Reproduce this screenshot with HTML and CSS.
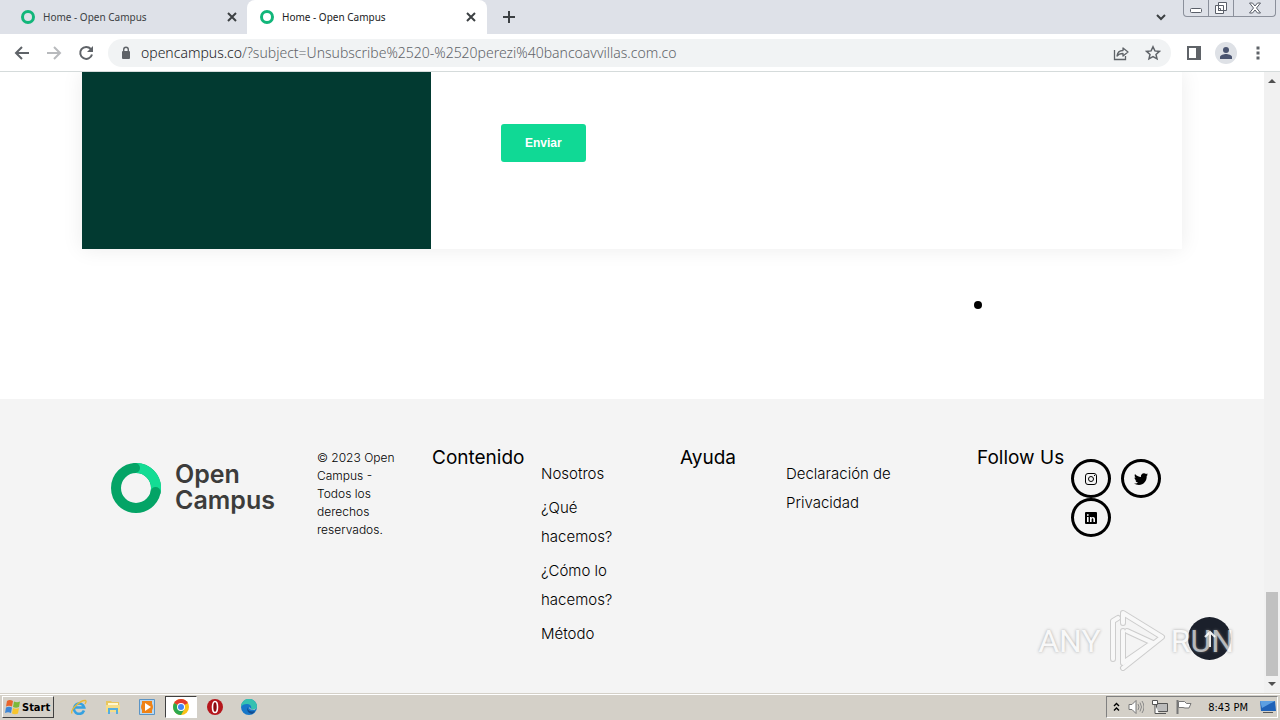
FILE: index.html
```html
<!DOCTYPE html>
<html lang="es">
<head>
    <meta charset="UTF-8">
    <meta name="viewport" content="width=device-width, initial-scale=1.0">
    <title>Home - Open Campus</title>
    <link rel="stylesheet" href="styles.css">
</head>
<body>
<header class="browser">
    <div class="tabs">
        <div class="tab">
            <span class="favicon"></span>
            <span class="tab-title">Home - Open Campus</span>
            <button class="icon-btn" aria-label="Close tab">
                <svg width="10" height="10" viewBox="0 0 10 10"><path d="M1 1l8 8M9 1l-8 8" stroke="#3c4043" stroke-width="2"/></svg>
            </button>
        </div>
        <div class="tab active">
            <span class="favicon"></span>
            <span class="tab-title">Home - Open Campus</span>
            <button class="icon-btn" aria-label="Close tab">
                <svg width="10" height="10" viewBox="0 0 10 10"><path d="M1 1l8 8M9 1l-8 8" stroke="#3c4043" stroke-width="2"/></svg>
            </button>
        </div>
        <button class="icon-btn new-tab" aria-label="New tab">
            <svg width="12" height="12" viewBox="0 0 12 12"><path d="M6 0v12M0 6h12" stroke="#3c4043" stroke-width="2"/></svg>
        </button>
        <button class="icon-btn tab-search" aria-label="Search tabs">
            <svg width="10" height="7" viewBox="0 0 10 7"><path d="M1 1l4 4 4-4" fill="none" stroke="#3c4043" stroke-width="2"/></svg>
        </button>
        <div class="window-controls">
            <button aria-label="Minimize"><svg width="24" height="16" viewBox="0 0 24 16"><rect x="6.500" y="8.500" width="11" height="4" rx="1" fill="#fff" stroke="#5a5f69"/></svg></button>
            <button aria-label="Restore"><svg width="24" height="16" viewBox="0 0 24 16"><path d="M9.500 2.500h8v8h-8z M6.500 5.500h8v8h-8z" fill="#fff" stroke="#5a5f69"/><path d="M9.500 8.500h2v2h-2z" fill="none" stroke="#5a5f69"/></svg></button>
            <button aria-label="Close"><svg width="41" height="16" viewBox="0 0 41 16"><path d="M15.500 3h3l2.500 3L23.500 3h3l-4 5 4 5h-3l-2.500-3-2.500 3h-3l4-5z" fill="#fff" stroke="#5a5f69"/></svg></button>
        </div>
    </div>
    <div class="toolbar">
        <button class="icon-btn" aria-label="Back"><svg width="16" height="16" viewBox="0 0 16 16"><path d="M15 8H2M8 2L2 8l6 6" fill="none" stroke="#5f6368" stroke-width="2"/></svg></button>
        <button class="icon-btn" aria-label="Forward"><svg width="16" height="16" viewBox="0 0 16 16"><path d="M1 8h13M8 2l6 6-6 6" fill="none" stroke="#b8babd" stroke-width="2"/></svg></button>
        <button class="icon-btn" aria-label="Reload"><svg width="16" height="16" viewBox="0 0 16 16"><path d="M12.800 4A6 6 0 1 0 14 9.500" fill="none" stroke="#5f6368" stroke-width="2"/><path d="M15 1v6H9z" fill="#5f6368"/></svg></button>
        <div class="address">
            <svg width="10" height="14" viewBox="0 0 10 14"><rect x="1" y="5" width="8" height="8" rx="1" fill="#5f6368"/><path d="M2.700 6V3.500a2.300 2.300 0 0 1 4.600 0V6" fill="none" stroke="#5f6368" stroke-width="1.400"/></svg>
            <div class="url"><span>opencampus.co</span>/?subject=Unsubscribe%2520-%2520perezi%40bancoavvillas.com.co</div>
            <button class="icon-btn" aria-label="Share"><svg width="16" height="16" viewBox="0 0 16 16"><path d="M1.500 5v9.500h11V11" fill="none" stroke="#5f6368" stroke-width="1.300"/><path d="M4 11c.5-4 3-5.500 6-5.500V3l5 4-5 4V8.500c-3 0-4.500.5-6 2.500z" fill="none" stroke="#5f6368" stroke-width="1.300" stroke-linejoin="round"/></svg></button>
            <button class="icon-btn" aria-label="Bookmark"><svg width="16" height="16" viewBox="0 0 16 16"><path d="M8 1.800l1.900 4.100 4.500.5-3.400 3 1 4.400L8 11.500l-4 2.300 1-4.400-3.400-3 4.500-.5z" fill="none" stroke="#5f6368" stroke-width="1.500"/></svg></button>
        </div>
        <div class="toolbar-actions">
            <button class="icon-btn" aria-label="Side panel"><svg width="14" height="14" viewBox="0 0 14 14"><path d="M1 1h12v12H1z" fill="none" stroke="#5f6368" stroke-width="2"/><path d="M9 0h5v14H9z" fill="#5f6368"/></svg></button>
            <button class="icon-btn" aria-label="Profile"><svg width="22" height="22" viewBox="0 0 22 22"><circle cx="11" cy="11" r="11" fill="#dee1e6"/><circle cx="11" cy="8" r="3" fill="#4a5470"/><path d="M5 17v-2c0-2 4-3 6-3s6 1 6 3v2z" fill="#4a5470"/></svg></button>
            <button class="icon-btn menu-btn" aria-label="Menu"><svg width="4" height="14" viewBox="0 0 4 14"><path d="M.5.5h3v3h-3zM.5 5.500h3v3h-3zM.5 10.500h3v3h-3z" fill="#5f6368"/></svg></button>
        </div>
    </div>
</header>

<div class="viewport">
    <div class="page">
        <main>
            <section class="container contact">
                <div class="contact-side"></div>
                <form class="contact-form">
                    <button type="button" class="btn">Enviar</button>
                </form>
            </section>
            <span class="cursor-dot"></span>
        </main>

        <footer>
            <div class="container footer-grid">
                <a href="#" class="logo">
                    <svg width="50" height="50" viewBox="0 0 50 50">
                        <circle cx="25" cy="25" r="20" fill="none" stroke="#04a466" stroke-width="10"/>
                        <path d="M25 5A20 20 0 0 1 44.800 28" fill="none" stroke="#13dc94" stroke-width="10"/>
                        <circle cx="24" cy="5" r="5" fill="#04a466"/>
                        <circle cx="44.600" cy="29" r="5" fill="#04a466"/>
                    </svg>
                    <span>Open<br>Campus</span>
                </a>
                <p class="copyright">© 2023 Open Campus - Todos los derechos reservados.</p>
                <h2>Contenido</h2>
                <ul class="links">
                    <li><a href="#">Nosotros</a></li>
                    <li><a href="#">¿Qué hacemos?</a></li>
                    <li><a href="#">¿Cómo lo hacemos?</a></li>
                    <li><a href="#">Método</a></li>
                </ul>
                <h2>Ayuda</h2>
                <ul class="links">
                    <li><a href="#">Declaración de Privacidad</a></li>
                </ul>
                <h2>Follow Us</h2>
                <div class="social">
                    <a href="#" aria-label="Instagram"><svg width="12" height="12" viewBox="0 0 12 12" fill="none" stroke="#000"><rect x=".5" y=".5" width="11" height="11" rx="2.500"/><circle cx="6" cy="6" r="2.500"/><path d="M9 2.500h1"/></svg></a>
                    <a href="#" aria-label="Twitter"><svg width="14" height="12" viewBox="0 0 14 12"><path d="M14 1.500l-1.300 1.600C13 8 9.500 12 5 12c-2 0-3.600-.5-5-1.400 1.600 0 3-.3 4-1.200-1.300 0-2.200-.8-2.600-2h1.200C1.200 7 .5 5.800.5 4.500l1.200.3C.6 3.800.4 2.200 1 1c1.500 1.800 3.500 2.800 6 3C6.500 2 8 .2 10 .2c.8 0 1.500.3 2 .9L13.700.5l-1 1.300z"/></svg></a>
                    <a href="#" aria-label="LinkedIn"><svg width="12" height="12" viewBox="0 0 12 12"><rect width="12" height="12" rx="1"/><path d="M2 5h1.600v5H2zM2 2.200h1.600v1.600H2zM5 5h1.500v.8C7.500 4.400 10 4.800 10 7v3H8.400V7.400c0-1.600-1.800-1.500-1.800 0V10H5z" fill="#fff"/></svg></a>
                </div>
            </div>
        </footer>
    </div>

    <div class="scrollbar">
        <svg width="8" height="4" viewBox="0 0 8 4"><path d="M0 4l4-4 4 4z" fill="#505050"/></svg>
        <div class="thumb"></div>
        <svg width="8" height="4" viewBox="0 0 8 4"><path d="M0 0l4 4 4-4z" fill="#505050"/></svg>
    </div>

    <button class="to-top" aria-label="Back to top"><svg width="12" height="18" viewBox="0 0 12 18"><path d="M6 17V2M1 7l5-5 5 5" fill="none" stroke="#fff" stroke-width="2"/></svg></button>

    <div class="watermark">
        <span>ANY</span>
        <svg width="60" height="64" viewBox="0 0 60 64" fill="none" stroke-linejoin="round" stroke-linecap="round">
            <g stroke="#bdbdbd" stroke-width="6">
                <path d="M7 50V12l5-3M17 22v32L43 36"/><path d="M17 14V4l39 24-39 31"/><path d="M21 22l26 12"/>
            </g>
            <g stroke="#fafafa" stroke-width="4">
                <path d="M7 50V12l5-3M17 22v32L43 36"/><path d="M17 14V4l39 24-39 31"/><path d="M21 22l26 12"/>
            </g>
        </svg>
        <span>RUN</span>
    </div>
</div>

<div class="taskbar">
    <button class="start">
        <svg width="16" height="16" viewBox="0 0 16 16"><path d="M2 2c2-1.500 4-1 6 0L7 7.500c-2-1-4-1-6 0z" fill="#e8642c"/><path d="M9 2.500c2 1 4 1 6 0l-1 5.500c-2 1-4 1-6 0z" fill="#7cb83a"/><path d="M1 8.500c2-1 4-1 6 0l-1 5.500c-2-1-4-1-6 0z" fill="#3d86d6"/><path d="M8 9c2 1 4 1 6 0l-1 5.500c-2 1-4 1-6 0z" fill="#f7c52d"/></svg>
        Start
    </button>
    <div class="launch">
        <button aria-label="Internet Explorer"><svg width="16" height="16" viewBox="0 0 16 16"><path d="M13 11.500A5.200 5.200 0 1 1 13.200 8.500H4" fill="none" stroke="#35a1e0" stroke-width="2.600"/><path d="M1 14.500C-1 11 9 1 14.500 1.500c1 .5.500 2-.5 3.500" fill="none" stroke="#e9b935" stroke-width="1.300"/></svg></button>
        <button aria-label="Explorer"><svg width="16" height="16" viewBox="0 0 16 16"><path d="M1 2h5l1 1h7v10H1z" fill="#e8c65f"/><path d="M3 4h10v3H3z" fill="#fff7cf"/><path d="M1 6h14v7H1z" fill="#f5dd88"/><path d="M3 15V9h10v6h-2v-4H5v4z" fill="#55aede"/></svg></button>
        <button aria-label="Media Player"><svg width="16" height="16" viewBox="0 0 16 16"><path d="M.5.5h15v15H.5z" fill="#b8d8f2" stroke="#5b94c5"/><path d="M3 2h10v12H3z" fill="#ef8318"/><circle cx="8" cy="8" r="6" fill="#ef8318"/><path d="M6 4l6 4-6 4z" fill="#fff"/></svg></button>
        <button class="pressed" aria-label="Chrome"><svg width="16" height="16" viewBox="0 0 16 16"><circle cx="8" cy="8" r="8" fill="#fbc116"/><path d="M8 8L1.100 4A8 8 0 0 1 14.900 4z" fill="#e33b2e"/><path d="M8 8L1.100 4A8 8 0 0 0 8 16l3.500-6z" fill="#2da94f"/><circle cx="8" cy="8" r="4" fill="#fff"/><circle cx="8" cy="8" r="3" fill="#4285f4"/></svg></button>
        <button aria-label="Opera"><svg width="16" height="16" viewBox="0 0 16 16"><circle cx="8" cy="8" r="8" fill="#b5161c"/><ellipse cx="8" cy="8" rx="2.500" ry="5.500" fill="#8c0a10" stroke="#fff" stroke-width="1.600"/></svg></button>
        <button aria-label="Edge"><svg width="16" height="16" viewBox="0 0 16 16"><circle cx="8" cy="8" r="8" fill="#1677c9"/><path d="M0 8a8 8 0 0 1 16-.5c0 3-4 4-6 2.500 1-3-1-5-4-5S1 6 0 8z" fill="#35c1b1"/><path d="M7 8c-1 3 2 5.500 7 4-1 1.500-2 2.500-3 3-4-1-6-4-4-7z" fill="#124c91"/><path d="M8 8c0 2 2 3.500 6 2.500l2-2.500c-1 2-4 3-6 2z" fill="#d4d0c8"/></svg></button>
    </div>
    <div class="tray">
        <svg width="7" height="10" viewBox="0 0 7 10"><path d="M1 4l2.500-2.500L6 4M1 8.500L3.500 6 6 8.500" fill="none" stroke="#000" stroke-width="1.400"/></svg>
        <svg width="16" height="16" viewBox="0 0 16 16"><path d="M1 5.500h3l4-4v13l-4-4H1z" fill="#fff" stroke="#777"/><path d="M10 5q2 3 0 6M12 3.500q3 4.500 0 9M14 2q4 6 0 12" fill="none" stroke="#888"/></svg>
        <svg width="16" height="16" viewBox="0 0 16 16"><path d="M4.500 4.500h11v8h-11zM7 14.500h7" fill="#bbb" stroke="#555"/><path d="M.5 1.500h5v4h-5zM3 5.500v9h4" fill="#fff" stroke="#555"/></svg>
        <svg width="16" height="16" viewBox="0 0 16 16"><path d="M1.500 1v14" stroke="#777" stroke-width="2"/><path d="M2.500 2.500h6l2 2h4.500l-2 4.500H9L7 8.500H2.500z" fill="#fff" stroke="#777"/></svg>
        <time>8:43 PM</time>
        <svg width="16" height="16" viewBox="0 0 16 16"><path d="M0 2h15l1 10H1z" fill="#1f62b8"/><path d="M0 2h15L2 9z" fill="#5c9fe2"/><path d="M3 13h10v1H3z" fill="#555"/></svg>
    </div>
</div>
</body>
</html>
```

FILE: styles.css
```css
* {
    margin: 0;
    padding: 0;
    box-sizing: border-box;
}
body {
    display: flex;
    flex-direction: column;
    min-height: 100vh;
    font-family: Inter, 'Open Sans', sans-serif;
    color: #000;
    background: #fff;
}
button {
    border: 0;
    background: none;
    font-family: inherit;
}
a {
    color: inherit;
    text-decoration: none;
}
svg {
    display: block;
    flex-shrink: 0;
}

/* browser window */
.browser {
    font-family: 'Noto Sans', sans-serif;
    border-bottom: 1px solid #d5dbdb;
}
.tabs {
    display: flex;
    align-items: center;
    height: 34px;
    background: #dee1e8;
}
.tab {
    display: flex;
    align-items: center;
    gap: 8px;
    width: 240px;
    height: 34px;
    padding: 0 11px 0 13px;
    border-radius: 8px 8px 0 0;
    font-size: 10px;
    color: #3c4043;
}
.tab:first-child {
    width: 247px;
    padding: 0 10px 0 21px;
}
.tab.active {
    background: #fff;
    color: #202124;
}
.favicon {
    width: 14px;
    height: 14px;
    border: 3px solid #12b67a;
    border-radius: 50%;
}
.tab-title {
    flex: 1;
}
.icon-btn {
    display: flex;
    align-items: center;
    justify-content: center;
}
.new-tab {
    margin-left: 16px;
}
.tab-search {
    margin-left: auto;
    margin-right: 17px;
}
.window-controls {
    display: flex;
    align-self: flex-start;
    margin-right: 4px;
    border: 1px solid #8b909b;
    border-top: 0;
    border-radius: 0 0 4px 4px;
}
.window-controls button + button {
    border-left: 1px solid #8b909b;
}
.toolbar {
    display: flex;
    align-items: center;
    gap: 16px;
    height: 37px;
    padding: 0 20px 0 14px;
}
.toolbar-actions {
    display: flex;
    align-items: center;
    gap: 14px;
}
.menu-btn {
    padding-left: 5px;
}
.address {
    display: flex;
    flex: 1;
    align-items: center;
    gap: 16px;
    height: 28px;
    margin-left: -2px;
    padding: 0 10px 0 13px;
    border-radius: 14px;
    background: #f1f3f4;
}
.url {
    flex: 1;
    margin-left: -6px;
    font-size: 14px;
    font-weight: 300;
    color: #5f6368;
}
.url span {
    color: #202124;
}

/* page */
.viewport {
    position: relative;
    display: flex;
    flex: 1;
}
.page {
    display: flex;
    flex: 1;
    flex-direction: column;
}
.container {
    width: 90%;
    max-width: 1100px;
    margin: 0 auto;
}
main {
    position: relative;
    padding-bottom: 150px;
}
.contact {
    display: flex;
    min-height: 177px;
    box-shadow: 0 0 20px rgba(0, 0, 0, 0.08);
    clip-path: inset(0 -20px -20px -20px);
}
.contact-side {
    width: 349px;
    background: #023a31;
}
.contact-form {
    flex: 1;
    padding: 52px 70px;
    background: #fff;
}
.btn {
    height: 38px;
    padding: 0 24px;
    border-radius: 3px;
    background: #10d995;
    color: #fff;
    font-family: 'Liberation Sans', Arial, sans-serif;
    font-size: 12px;
    font-weight: bold;
}
.cursor-dot {
    position: absolute;
    left: 974px;
    top: 229px;
    width: 8px;
    height: 8px;
    border-radius: 50%;
    background: #000;
}
footer {
    flex: 1;
    padding: 50px 0 40px;
    background: #f4f4f4;
}
.footer-grid {
    display: grid;
    grid-template-columns: 206fr 115fr 109fr 139fr 106fr 191fr 94fr 100fr;
    padding: 0 11px 0 29px;
}
.logo {
    display: flex;
    align-items: flex-start;
    gap: 14px;
    padding-top: 12px;
    font-size: 25px;
    font-weight: 600;
    line-height: 26px;
    color: #3c3c3b;
}
.logo svg {
    margin-top: 2px;
}
.copyright {
    padding-right: 25px;
    font-size: 12px;
    font-weight: 300;
    line-height: 18px;
}
h2 {
    font-size: 19px;
    font-weight: 400;
    line-height: 18px;
    white-space: nowrap;
}
.links {
    padding: 10px 56px 0 0;
    list-style: none;
    font-size: 15px;
    font-weight: 300;
    line-height: 29px;
}
.links li {
    margin-bottom: 5px;
}
.social {
    display: flex;
    flex-wrap: wrap;
    align-content: flex-start;
    column-gap: 10px;
    padding-top: 10px;
}
.social a {
    display: flex;
    align-items: center;
    justify-content: center;
    width: 40px;
    height: 39px;
    border: 3px solid #000;
    border-radius: 50%;
}
.scrollbar {
    display: flex;
    flex-direction: column;
    align-items: center;
    width: 16px;
    padding: 7px 0;
    background: #f1f1f1;
}
.thumb {
    width: 12px;
    height: 84px;
    margin: auto 0 6px;
    background: #c1c1c1;
}
.to-top {
    position: absolute;
    right: 49px;
    bottom: 33px;
    display: flex;
    align-items: center;
    justify-content: center;
    width: 43px;
    height: 43px;
    border-radius: 50%;
    background: #1b202b;
}
.watermark {
    position: absolute;
    right: 46px;
    bottom: 20px;
    display: flex;
    align-items: center;
    gap: 5px;
    opacity: 0.7;
    font-family: 'Liberation Sans Narrow', Roboto, sans-serif;
    font-size: 32px;
    line-height: 64px;
    color: #fafafa;
    text-shadow: 0 0 3px #888;
    pointer-events: none;
}

/* taskbar */
.taskbar {
    display: flex;
    align-items: center;
    height: 28px;
    padding: 0 2px 1px;
    border-top: 1px solid #d4d0c8;
    box-shadow: inset 0 1px #fff;
    background: #d4d0c8;
    font-family: 'DejaVu Sans Condensed', 'DejaVu Sans', sans-serif;
    font-size: 11px;
}
.start {
    display: flex;
    align-items: center;
    gap: 1px;
    height: 22px;
    padding: 0 3px 0 2px;
    border: 1px solid;
    border-color: #fff #404040 #404040 #fff;
    font-size: 11px;
    font-weight: bold;
}
.launch {
    display: flex;
    gap: 2px;
    margin-left: 9px;
}
.launch button {
    display: flex;
    align-items: center;
    justify-content: center;
    width: 32px;
    height: 22px;
}
.launch .pressed {
    border: 1px solid;
    border-color: #404040 #fff #fff #404040;
    background: #fff;
}
.tray {
    display: flex;
    align-items: center;
    gap: 8px;
    height: 22px;
    margin-left: auto;
    padding: 0 1px 0 6px;
    border: 1px solid;
    border-color: #808080 #fff #fff #808080;
}
.tray time {
    margin: 0 4px 0 8px;
}
```
